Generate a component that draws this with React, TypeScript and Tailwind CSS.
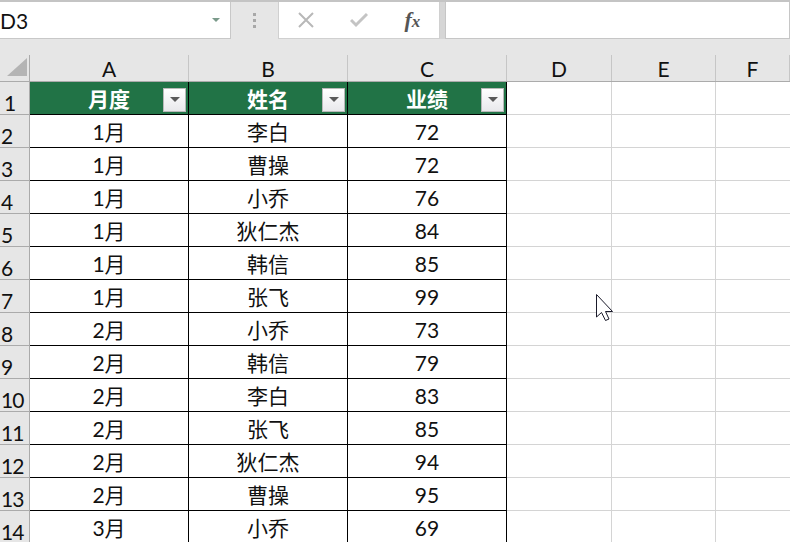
import React from "react";

const rows: [string, string, string][] = [
  ["1月", "李白", "72"],
  ["1月", "曹操", "72"],
  ["1月", "小乔", "76"],
  ["1月", "狄仁杰", "84"],
  ["1月", "韩信", "85"],
  ["1月", "张飞", "99"],
  ["2月", "小乔", "73"],
  ["2月", "韩信", "79"],
  ["2月", "李白", "83"],
  ["2月", "张飞", "85"],
  ["2月", "狄仁杰", "94"],
  ["2月", "曹操", "95"],
  ["3月", "小乔", "69"],
];

const gridCols = "grid grid-cols-[30px_159px_159px_159px_105px_104px_1fr]";

function FilterBtn() {
  return (
    <div className="absolute right-[2px] top-[6px] w-[23px] h-[24px] bg-gradient-to-b from-[#ffffff] to-[#e9e9ec] border border-[#b9b9b9] flex items-center justify-center">
      <svg width="10" height="6" viewBox="0 0 10 6">
        <path d="M0 0 H10 L5 5 Z" fill="#5a5a5a" />
      </svg>
    </div>
  );
}

function HeaderCell({ label }: { label: string }) {
  return (
    <div className="relative h-[33px] bg-[#217346] border-r border-b border-black flex items-center justify-center text-white font-bold text-[21px]">
      <span className="leading-none">{label}</span>
      <FilterBtn />
    </div>
  );
}

export default function App() {
  return (
    <div
      className="w-[790px] h-[542px] overflow-hidden bg-[#e6e6e6] relative text-[#111]"
      style={{ fontFamily: '"Lato", "Noto Sans CJK SC", sans-serif' }}
    >
      {/* toolbar */}
      <div className="h-[40px] border-t-2 border-[#c4c4c4] flex items-stretch pb-[1px]">
        <div className="w-[231px] bg-white border-r border-b border-[#c8c8c8] flex items-center justify-between pr-[10px]">
          <span className="text-[21px] leading-none">D3</span>
          <svg width="8" height="5" viewBox="0 0 8 5">
            <path d="M0 0 H8 L4 4 Z" fill="#7a9a8a" />
          </svg>
        </div>
        <div className="w-[47px] flex items-center justify-center">
          <div className="flex flex-col gap-[3px]">
            <div className="w-[3px] h-[3px] bg-[#a8a8a8]" />
            <div className="w-[3px] h-[3px] bg-[#a8a8a8]" />
            <div className="w-[3px] h-[3px] bg-[#a8a8a8]" />
          </div>
        </div>
        <div className="w-[162px] bg-white border border-t-0 border-[#d0d0d0] flex items-center">
          <div className="w-[54px] flex justify-center">
            <svg width="16" height="16" viewBox="0 0 16 16">
              <path d="M1 1 L15 15 M15 1 L1 15" stroke="#b8b8b8" strokeWidth="2" />
            </svg>
          </div>
          <div className="w-[54px] flex justify-center">
            <svg width="18" height="16" viewBox="0 0 18 16">
              <path d="M1 8 L6 13 L17 2" stroke="#c4c4c4" strokeWidth="3" fill="none" />
            </svg>
          </div>
          <div className="w-[54px] flex justify-center">
            <span
              className="italic font-bold text-[#555] text-[22px] leading-none"
              style={{ fontFamily: '"Liberation Serif", serif' }}
            >
              f<span className="text-[17px]">x</span>
            </span>
          </div>
        </div>
        <div className="w-[5px] bg-[#d6d6d6]" />
        <div className="flex-1 bg-white border border-t-0 border-[#c6c6c6]" />
      </div>

      <div className="h-[15px]" />

      {/* column header */}
      <div className={`${gridCols} h-[27px] border-b border-[#ababab]`}>
        <div className="border-r border-[#ababab] relative">
          <svg className="absolute left-[7px] top-[3px]" width="20" height="18" viewBox="0 0 20 18">
            <path d="M20 0 V18 H0 Z" fill="#b4b4b4" />
          </svg>
        </div>
        {["A", "B", "C", "D", "E", "F"].map((c) => (
          <div
            key={c}
            className="border-r border-[#c6c6c6] flex items-end justify-center pb-[2px] text-[21px] leading-none"
          >
            {c}
          </div>
        ))}
      </div>

      {/* row 1 */}
      <div className={gridCols}>
        <div className="h-[33px] border-r border-b border-[#ababab] flex items-end pl-[4px] pb-[1px] text-[21px] leading-none">
          1
        </div>
        <HeaderCell label="月度" />
        <HeaderCell label="姓名" />
        <HeaderCell label="业绩" />
        <div className="h-[33px] bg-white border-r border-b border-[#d4d4d4]" />
        <div className="h-[33px] bg-white border-r border-b border-[#d4d4d4]" />
        <div className="h-[33px] bg-white border-b border-[#d4d4d4]" />
      </div>

      {rows.map((r, i) => (
        <div key={i} className={gridCols}>
          <div className="h-[33px] border-r border-b border-[#ababab] flex items-end pl-[1px] pb-[1px] text-[21px] leading-none tracking-[-1px]">
            {i + 2}
          </div>
          {r.map((v, j) => (
            <div
              key={j}
              className="h-[33px] bg-white border-r border-b border-black flex items-center justify-center text-[21px] leading-none"
            >
              {v}
            </div>
          ))}
          <div className="h-[33px] bg-white border-r border-b border-[#d4d4d4]" />
          <div className="h-[33px] bg-white border-r border-b border-[#d4d4d4]" />
          <div className="h-[33px] bg-white border-b border-[#d4d4d4]" />
        </div>
      ))}

      {/* mouse cursor */}
      <svg
        className="absolute left-[596px] top-[294px]"
        width="19"
        height="28"
        viewBox="0 0 19 28"
      >
        <path
          d="M0.5 0.5 V23 L5.5 18.5 L9.5 26.5 L13 25 L9.5 17.5 L16.5 17.5 Z"
          fill="#ffffff"
          stroke="#1a1a2a"
          strokeWidth="1"
        />
      </svg>
    </div>
  );
}
